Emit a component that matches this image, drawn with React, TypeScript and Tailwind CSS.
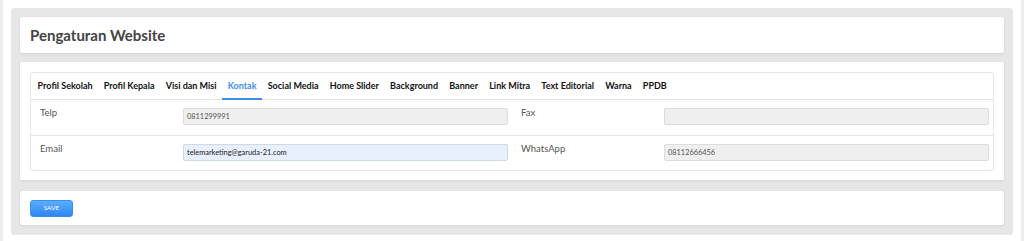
import React from "react";

const TABS = [
  "Profil Sekolah",
  "Profil Kepala",
  "Visi dan Misi",
  "Kontak",
  "Social Media",
  "Home Slider",
  "Background",
  "Banner",
  "Link Mitra",
  "Text Editorial",
  "Warna",
  "PPDB",
];

function Field({ label, value, active }: { label: string; value: string; active?: boolean }) {
  return (
    <div className="flex items-start">
      <div className="w-[143px] leading-[12px] text-[9.5px] text-[#555]">{label}</div>
      <div
        className={`w-[325px] h-[17px] mt-[1px] rounded-[2px] border px-[3px] flex items-center text-[7.4px] ${
          active ? "bg-[#e8f0fe] border-[#cfd8e6] text-[#222]" : "bg-[#efefef] border-[#dcdcdc] text-[#555]"
        }`}
      >
        {value}
      </div>
    </div>
  );
}

export default function App() {
  return (
    <div className="w-[1024px] h-[241px] bg-white flex font-['Lato',sans-serif]">
      <div className="w-[3px] bg-[#ececec]" />
      <div className="flex-1 pl-[8px] pr-[8px] pt-[8px] pb-[6px]">
        <div className="h-full rounded-[3px] bg-[#e6e6e6] px-[9px] pt-[9px] flex flex-col">
          <div className="h-[36px] rounded-[3px] bg-white shadow-[0_1px_3px_rgba(0,0,0,0.08)] flex items-center px-[10px]">
            <h1 className="text-[15px] font-bold text-[#444]">Pengaturan Website</h1>
          </div>

          <div className="mt-[9px] rounded-[2px] bg-white shadow-[0_1px_3px_rgba(0,0,0,0.08)] p-[10px] pb-[9px]">
            <div className="rounded-[3px] border border-[#e6e6e6]">
              <div className="flex h-[27px] items-stretch border-b border-[#e6e6e6] pl-[1px]">
                {TABS.map((t) => (
                  <div
                    key={t}
                    className={`relative px-[5.6px] flex items-center text-[9px] font-bold ${
                      t === "Kontak" ? "text-[#3b8fea]" : "text-[#111]"
                    }`}
                  >
                    {t}
                    {t === "Kontak" && (
                      <span className="absolute left-0 right-0 bottom-[-1px] h-[2px] bg-[#3b8fea]" />
                    )}
                  </div>
                ))}
              </div>
              <div className="flex gap-[13px] pl-[9px] h-[36px] pt-[7px] border-b border-[#e6e6e6]">
                <Field label="Telp" value="0811299991" />
                <Field label="Fax" value="" />
              </div>
              <div className="flex gap-[13px] pl-[9px] h-[34px] pt-[7px]">
                <Field label="Email" value="telemarketing@garuda-21.com" active />
                <Field label="WhatsApp" value="08112666456" />
              </div>
            </div>
          </div>

          <div className="mt-[11px] h-[34px] rounded-[3px] bg-white shadow-[0_1px_3px_rgba(0,0,0,0.08)] flex items-center px-[10px]">
            <button className="w-[43px] h-[17px] rounded-[3px] bg-gradient-to-b from-[#5aaeff] to-[#2c86f2] border border-[#3a8fe8] text-[6.5px] text-white">
              SAVE
            </button>
          </div>
        </div>
      </div>
      <div className="w-[3px] bg-[#ececec]" />
    </div>
  );
}
